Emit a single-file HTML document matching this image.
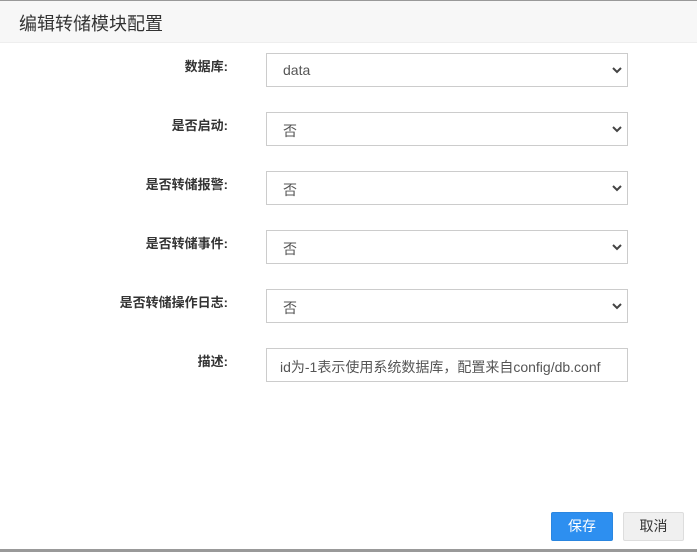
<!DOCTYPE html>
<html><head><meta charset="utf-8"><style>
body{margin:0;width:697px;height:552px;overflow:hidden;background:#fff;font-family:"Liberation Sans","Noto Sans CJK SC",sans-serif;position:relative}
.top{position:absolute;left:0;top:0;width:697px;height:1px;background:#999}
.hd{position:absolute;left:0;top:1px;width:697px;height:41px;background:#f7f7f7;border-bottom:1px solid #eee}
.hd span{position:absolute;left:19px;top:9px;font-size:18px;color:#333}
.lb{position:absolute;right:469px;font-size:13px;font-weight:bold;color:#333;white-space:nowrap}
.sel{position:absolute;left:266px;width:360px;height:32px;border:1px solid #ccc;box-sizing:content-box;font-size:14px;color:#555}
.sel span{position:absolute;left:16px;top:8px}
.sel svg{position:absolute;right:4px;top:12px}
.btn{position:absolute;top:512px;height:27px;font-size:14px;border-radius:2px;text-align:center;line-height:27px}
.bot{position:absolute;left:0;top:549px;width:697px;height:3px;background:#999}
</style></head><body>
<div class="top"></div>
<div class="hd"><span>编辑转储模块配置</span></div>

<div class="lb" style="top:56px">数据库:</div>
<div class="sel" style="top:53px"><span>data</span><svg width="12" height="8" viewBox="0 0 12 8"><path d="M2 2l4 4 4-4" stroke="#444" stroke-width="2" fill="none"/></svg></div>

<div class="lb" style="top:115px">是否启动:</div>
<div class="sel" style="top:112px"><span>否</span><svg width="12" height="8" viewBox="0 0 12 8"><path d="M2 2l4 4 4-4" stroke="#444" stroke-width="2" fill="none"/></svg></div>

<div class="lb" style="top:174px">是否转储报警:</div>
<div class="sel" style="top:171px"><span>否</span><svg width="12" height="8" viewBox="0 0 12 8"><path d="M2 2l4 4 4-4" stroke="#444" stroke-width="2" fill="none"/></svg></div>

<div class="lb" style="top:233px">是否转储事件:</div>
<div class="sel" style="top:230px"><span>否</span><svg width="12" height="8" viewBox="0 0 12 8"><path d="M2 2l4 4 4-4" stroke="#444" stroke-width="2" fill="none"/></svg></div>

<div class="lb" style="top:292px">是否转储操作日志:</div>
<div class="sel" style="top:289px"><span>否</span><svg width="12" height="8" viewBox="0 0 12 8"><path d="M2 2l4 4 4-4" stroke="#444" stroke-width="2" fill="none"/></svg></div>

<div class="lb" style="top:351px">描述:</div>
<div class="sel" style="top:348px;color:#555"><span style="left:13px">id为-1表示使用系统数据库，配置来自config/db.conf</span></div>

<div class="btn" style="left:551px;width:60px;background:#2d8ff0;color:#fff;border:1px solid #2a86e0">保存</div>
<div class="btn" style="left:623px;width:59px;background:#f0f0f0;color:#333;border:1px solid #ddd">取消</div>
<div class="bot"></div>
</body></html>
